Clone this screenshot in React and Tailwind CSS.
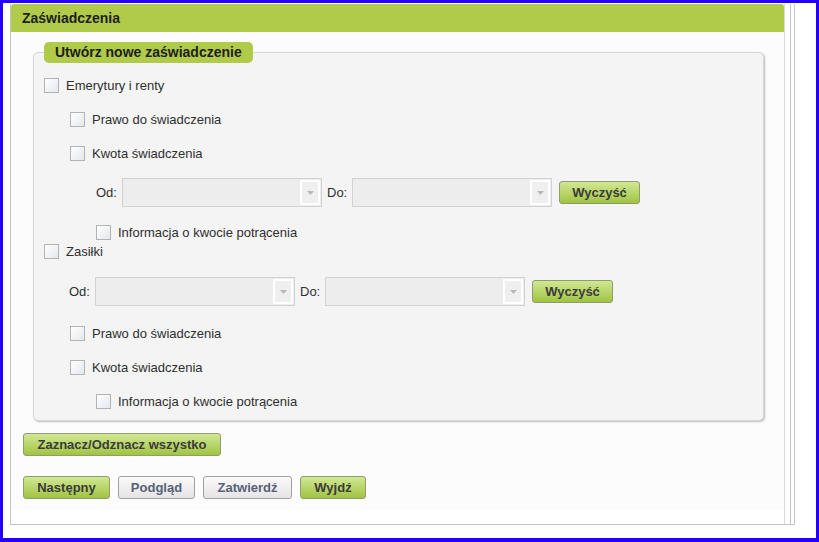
import React from 'react';

const font = { fontFamily: '"Liberation Sans", Arial, sans-serif' };

const Checkbox = () => (
  <div className="w-[15px] h-[15px] shrink-0 border border-[#b3b3b3] bg-gradient-to-br from-white to-[#e2e8ee]" />
);

const CheckRow = ({ label, className = '' }) => (
  <div className={`flex items-center gap-[7px] h-[15px] ${className}`}>
    <Checkbox />
    <span className="text-[13px] text-[#2f2f2f] whitespace-nowrap leading-none">{label}</span>
  </div>
);

const Select = () => (
  <div className="w-[200px] h-[29px] border border-[#d2d2d2] bg-[#ededed] flex justify-end p-[1px]">
    <div className="w-[20px] h-full border-2 border-white bg-[#efefef] flex items-center justify-center">
      <svg width="7" height="4" viewBox="0 0 7 4">
        <polygon points="0,0 7,0 3.5,4" fill="#b8b8b8" />
      </svg>
    </div>
  </div>
);

const Button = ({ children, gray, className = '' }) => (
  <button
    className={`h-[23px] rounded-[3px] border text-[13px] font-bold leading-none flex items-center justify-center ${
      gray
        ? 'border-[#a0a0a0] bg-gradient-to-b from-[#fafafa] to-[#e4e4e4] text-[#566177]'
        : 'border-[#8e9c72] bg-gradient-to-b from-[#d2e792] to-[#a1c43e] text-[#3b3b3b]'
    } ${className}`}
  >
    {children}
  </button>
);

const RangeRow = ({ className = '' }) => (
  <div className={`flex items-center h-[29px] ${className}`}>
    <span className="text-[13px] text-[#2f2f2f] w-[21px]">Od:</span>
    <div className="ml-[5px]"><Select /></div>
    <span className="ml-[5px] text-[13px] text-[#2f2f2f] w-[20px]">Do:</span>
    <div className="ml-[5px]"><Select /></div>
    <Button className="ml-[7px] w-[81px]">Wyczyść</Button>
  </div>
);

export default function App() {
  return (
    <div style={font} className="w-[819px] h-[542px] bg-white border-[#2400ff] border-l-[3px] border-t-[3px] border-r-[3px] border-b-[4px] pl-[7px] pt-[1px]">
      <div className="w-[785px] h-[521px] border-l border-r border-b border-[#c4c4c4] flex">
        {/* panel */}
        <div className="w-[774px] h-full border-r border-[#dadada] flex flex-col">
          <div className="h-[28px] bg-[#b0ca4a] rounded-t-[3px] flex items-center pl-[11px]">
            <span className="text-[14px] font-bold text-[#1e1e1e]">Zaświadczenia</span>
          </div>
          <div className="bg-[#fcfcfc] pl-[12px] pb-[11px]">
            <div className="relative ml-[10px] mt-[20px] w-[731px] border border-[#d6d6d6] rounded-[5px] bg-[#f4f4f4] shadow-[1px_1px_2px_rgba(0,0,0,0.25)] pt-[25px] pb-[11px] pl-[10px]">
              <div className="absolute left-[10px] -top-[11px] h-[21px] px-[11px] rounded-[5px] bg-[#b0ca4a] flex items-center">
                <span className="text-[14px] font-bold text-[#1e1e1e] whitespace-nowrap">Utwórz nowe zaświadczenie</span>
              </div>
              <CheckRow label="Emerytury i renty" />
              <div className="pl-[26px]">
                <CheckRow label="Prawo do świadczenia" className="mt-[19px]" />
                <CheckRow label="Kwota świadczenia" className="mt-[19px]" />
                <div className="pl-[26px]">
                  <RangeRow className="mt-[17px]" />
                  <CheckRow label="Informacja o kwocie potrącenia" className="mt-[18px]" />
                </div>
              </div>
              <CheckRow label="Zasiłki" className="mt-[4px]" />
              <div className="pl-[25px]">
                <RangeRow className="mt-[18px]" />
              </div>
              <div className="pl-[26px]">
                <CheckRow label="Prawo do świadczenia" className="mt-[20px]" />
                <CheckRow label="Kwota świadczenia" className="mt-[19px]" />
                <div className="pl-[26px]">
                  <CheckRow label="Informacja o kwocie potrącenia" className="mt-[19px]" />
                </div>
              </div>
            </div>
            <Button className="mt-[12px] w-[198px]">Zaznacz/Odznacz wszystko</Button>
            <div className="mt-[20px] flex gap-[8px]">
              <Button className="w-[87px]">Następny</Button>
              <Button gray className="w-[77px]">Podgląd</Button>
              <Button gray className="w-[89px]">Zatwierdź</Button>
              <Button className="w-[66px]">Wyjdź</Button>
            </div>
          </div>
        </div>
        {/* scrollbar lines */}
        <div className="ml-[5px] w-[4px] h-full border-l border-[#c4c4c4]" />
      </div>
    </div>
  );
}
